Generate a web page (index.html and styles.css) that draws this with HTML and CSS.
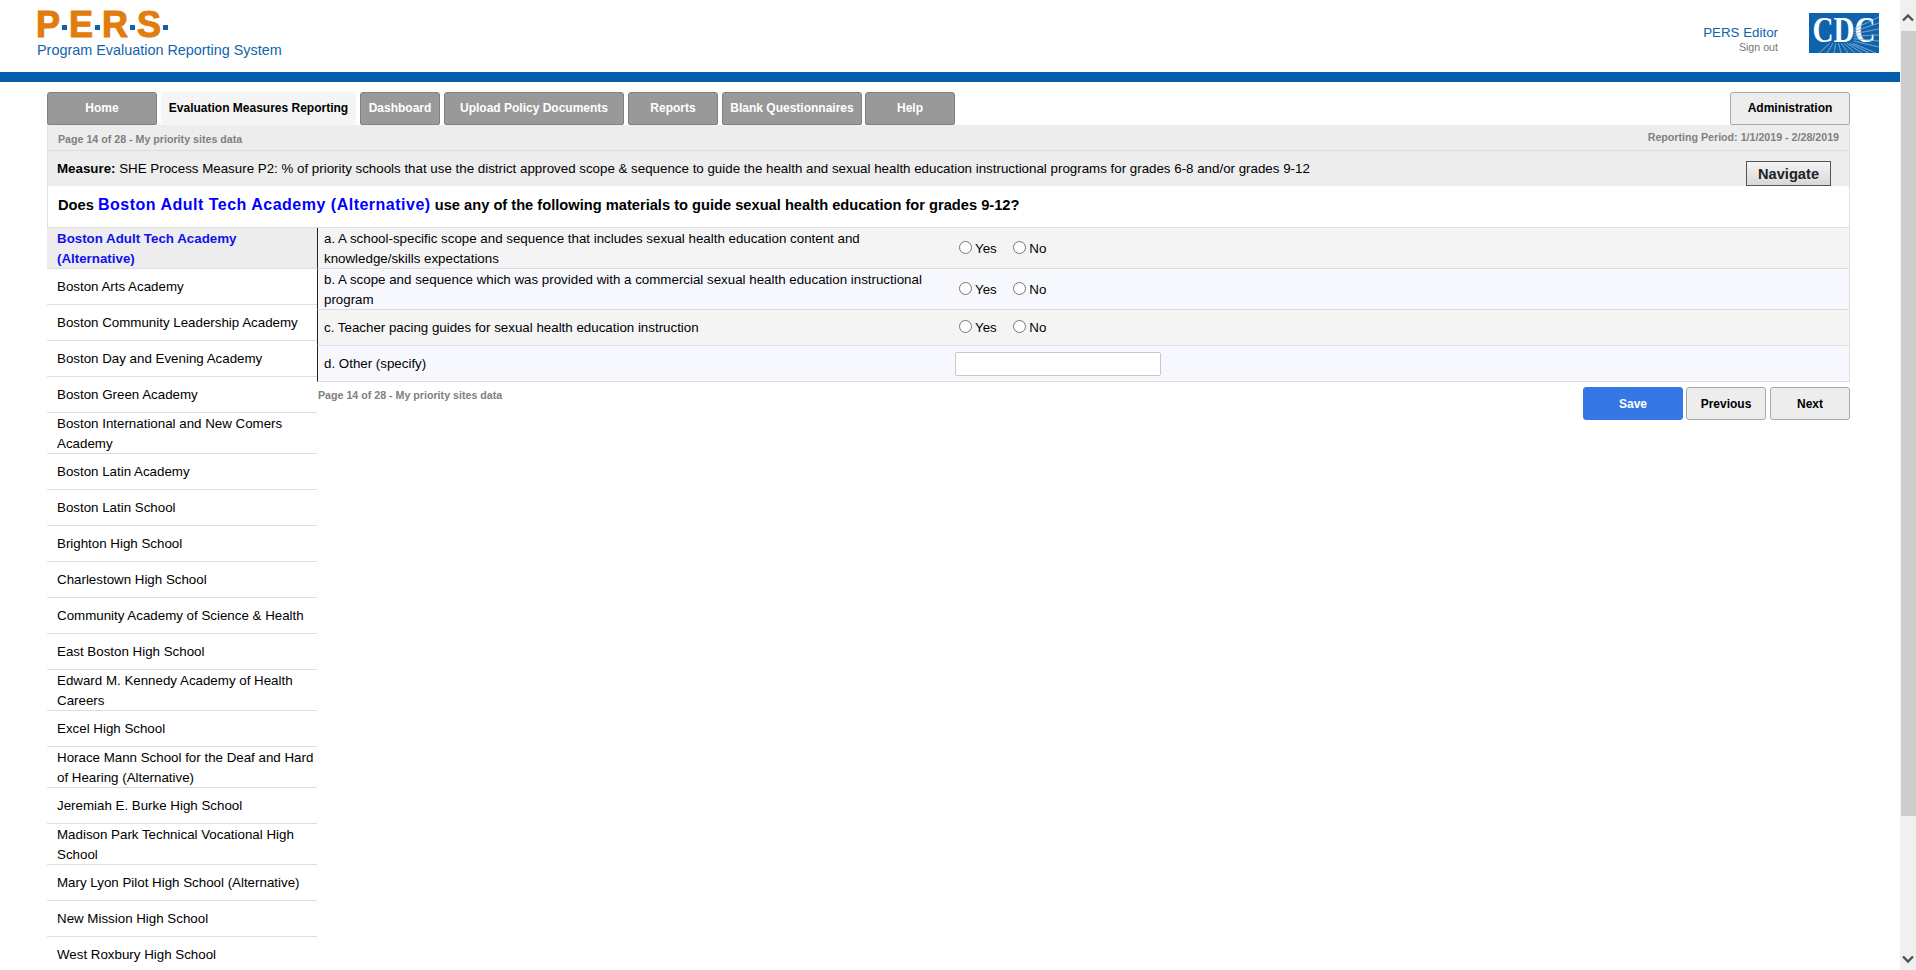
FILE: index.html
```html
<!DOCTYPE html>
<html lang="en">
<head>
<meta charset="utf-8">
<title>PERS</title>
<link rel="stylesheet" href="styles.css">
</head>
<body>
<div class="page">
  <header class="header">
    <div class="brand">
      <div class="logo">P<i></i>E<i></i>R<i></i>S<i></i></div>
      <div class="tagline">Program Evaluation Reporting System</div>
    </div>
    <div class="user">
      <div class="user-name">PERS Editor</div>
      <div class="sign-out">Sign out</div>
    </div>
    <svg class="cdc" viewBox="0 0 70 40" width="70" height="40">
      <defs>
        <path id="rays" d="M20.8 30.4L10 40M24 30.4L18 40M26.8 30.4L25 40M29.6 30.4L32 40M32.4 30.4L39 40M35.2 30.4L46 40M38 30.4L53 40M40.8 30.4L60 40M43.6 30.4L67 40M44.8 28L70 34M44.8 25.6L70 28M44.8 23.2L70 22M44.8 20.8L70 16M44.8 18.4L70 10M44.8 16L70 4"/>
      </defs>
      <rect width="70" height="40" fill="#0f63ad"/>
      <use href="#rays" fill="none" stroke="#fff" stroke-width=".6"/>
      <text class="cdc-text" transform="translate(35 29) scale(.97 1.2)" text-anchor="middle">CDC</text>
      <use href="#rays" fill="none" stroke="#0f63ad" stroke-width=".4"/>
    </svg>
  </header>
  <div class="rule"></div>
  <main class="content">
    <nav class="tabs">
      <a class="tab w-home">Home</a>
      <a class="tab active">Evaluation Measures Reporting</a>
      <a class="tab w-dash">Dashboard</a>
      <a class="tab w-upload">Upload Policy Documents</a>
      <a class="tab w-reports">Reports</a>
      <a class="tab w-blank">Blank Questionnaires</a>
      <a class="tab w-help">Help</a>
      <a class="tab admin">Administration</a>
    </nav>
    <div class="panel">
      <div class="pagebar">
        <span class="muted page-left">Page 14 of 28 - My priority sites data</span>
        <span class="muted page-right">Reporting Period: 1/1/2019 - 2/28/2019</span>
      </div>
      <div class="measure">
        <div><b>Measure:</b> SHE Process Measure P2: % of priority schools that use the district approved scope &amp; sequence to guide the health and sexual health education instructional programs for grades 6-8 and/or grades 9-12</div>
        <button class="navigate">Navigate</button>
      </div>
      <h1 class="question">Does <span class="school">Boston Adult Tech Academy (Alternative)</span> use any of the following materials to guide sexual health education for grades 9-12?</h1>
    </div>
    <div class="columns">
      <ul class="sites">
        <li class="site current">Boston Adult Tech Academy (Alternative)</li>
        <li class="site">Boston Arts Academy</li>
        <li class="site">Boston Community Leadership Academy</li>
        <li class="site">Boston Day and Evening Academy</li>
        <li class="site">Boston Green Academy</li>
        <li class="site">Boston International and New Comers Academy</li>
        <li class="site">Boston Latin Academy</li>
        <li class="site">Boston Latin School</li>
        <li class="site">Brighton High School</li>
        <li class="site">Charlestown High School</li>
        <li class="site">Community Academy of Science &amp; Health</li>
        <li class="site">East Boston High School</li>
        <li class="site">Edward M. Kennedy Academy of Health Careers</li>
        <li class="site">Excel High School</li>
        <li class="site">Horace Mann School for the Deaf and Hard of Hearing (Alternative)</li>
        <li class="site">Jeremiah E. Burke High School</li>
        <li class="site">Madison Park Technical Vocational High School</li>
        <li class="site">Mary Lyon Pilot High School (Alternative)</li>
        <li class="site">New Mission High School</li>
        <li class="site">West Roxbury High School</li>
      </ul>
      <div class="form">
        <div class="table">
          <div class="row odd">
            <div class="label">a. A school-specific scope and sequence that includes sexual health education content and knowledge/skills expectations</div>
            <div class="answer"><label class="radio"><i class="dot"></i>Yes</label><label class="radio"><i class="dot"></i>No</label></div>
          </div>
          <div class="row even">
            <div class="label">b. A scope and sequence which was provided with a commercial sexual health education instructional program</div>
            <div class="answer"><label class="radio"><i class="dot"></i>Yes</label><label class="radio"><i class="dot"></i>No</label></div>
          </div>
          <div class="row odd short">
            <div class="label">c. Teacher pacing guides for sexual health education instruction</div>
            <div class="answer"><label class="radio"><i class="dot"></i>Yes</label><label class="radio"><i class="dot"></i>No</label></div>
          </div>
          <div class="row even short">
            <div class="label">d. Other (specify)</div>
            <div class="answer"><input class="specify" type="text"></div>
          </div>
        </div>
        <div class="footer">
          <span class="muted">Page 14 of 28 - My priority sites data</span>
          <div class="actions">
            <button class="btn save">Save</button>
            <button class="btn prev">Previous</button>
            <button class="btn next">Next</button>
          </div>
        </div>
      </div>
    </div>
  </main>
</div>
<aside class="scrollbar">
  <svg class="arrow" viewBox="0 0 12 8" width="12" height="8"><path d="M1 6.5L6 1.5L11 6.5" fill="none" stroke="#505050" stroke-width="2.4"/></svg>
  <div class="thumb"></div>
  <svg class="arrow" viewBox="0 0 12 8" width="12" height="8"><path d="M1 1.5L6 6.5L11 1.5" fill="none" stroke="#505050" stroke-width="2.4"/></svg>
</aside>
</body>
</html>
```
FILE: styles.css
```css
* { box-sizing: border-box; }
html, body { height: 970px; margin: 0; overflow: hidden; }
body { display: flex; background: #fff; color: #000; font: 13.33px/20px "Liberation Sans", Arial, sans-serif; }
.page { width: 1900px; flex: none; }
.header { height: 72px; display: flex; align-items: flex-start; padding: 13px 21px 0 37px; }
.brand { flex: 1; margin-top: -3px; }
.logo { font-weight: 700; font-size: 36px; line-height: 30px; margin-left: -1px; color: #e17c0d; -webkit-text-stroke: 1.1px #e17c0d; display: flex; align-items: center; }
.logo i { width: 5px; height: 5px; background: #0f63ad; margin: 4px 2px 0 2px; }
.tagline { color: #0f63ad; font-size: 14.4px; line-height: 18px; margin-top: 1px; }
.user { text-align: right; margin-right: 31px; padding-top: 12px; }
.user-name { color: #0f63ad; line-height: 16px; }
.sign-out { color: #777; font-size: 10.67px; line-height: 12px; }
.cdc { display: block; flex: none; overflow: visible; }
.cdc-text { font-family: "Liberation Serif", serif; font-size: 30px; font-weight: 700; fill: #fff; }
.rule { height: 10px; background: #005eaa; }
.content { padding: 10px 50px 0 47px; }
.tabs { display: flex; gap: 4px; height: 33px; }
.tab { display: flex; align-items: center; justify-content: center; padding-bottom: 2px; background: #999; border: 1px solid #808080; border-radius: 3px 3px 2px 2px; color: #fff; font-weight: 700; font-size: 12px; }
.w-home { width: 110px; }
.active { width: 195px; background: #f5f5f5; border: 0; color: #000; }
.w-dash { width: 80px; }
.w-upload { width: 180px; }
.w-reports { width: 90px; }
.w-blank { width: 140px; }
.w-help { width: 90px; margin-left: -1px; }
.admin { width: 120px; margin-left: auto; background: #ededed; color: #000; border-color: #a9a9a9; }
.panel { border: solid #e0e0e0; border-width: 0 1px; }
.pagebar { height: 26px; display: flex; justify-content: space-between; align-items: center; background: #ededed; border-bottom: 1px solid #dedede; padding: 0 10px; }
.page-left { margin-top: 2px; }
.page-right { margin-top: -2px; }
.muted { color: #808080; font-weight: 700; font-size: 10.67px; }
.measure { height: 35px; display: flex; justify-content: space-between; background: #ededed; padding: 0 18px 0 9px; line-height: 36px; }
.navigate { width: 85px; height: 25px; margin-top: 10px; border: 1px solid #555; background: linear-gradient(#f4f4f4, #d8d8d8); font: 700 14.67px "Liberation Sans", Arial, sans-serif; color: #222; padding: 0; }
.question { height: 42px; margin: 0; padding: 0 10px; font-size: 14.67px; line-height: 38px; font-weight: 700; border-bottom: 1px solid #dedede; }
.school { color: #00f; font-size: 16px; letter-spacing: .5px; }
.columns { display: flex; align-items: flex-start; }
.sites { list-style: none; margin: 0; padding: 0; width: 270px; flex: none; }
.site { min-height: 36px; display: flex; align-items: center; padding: 1px 3px 0 10px; line-height: 19.5px; border-bottom: 1px solid #dedede; }
.current { color: #11e; font-weight: 700; background: #ededed; min-height: 41px; }
.form { flex: 1; min-width: 0; }
.table { border-right: 1px solid #e0e0e0; }
.row { display: flex; align-items: center; min-height: 41px; border-left: 1px solid #222; border-bottom: 1px solid #dedede; }
.short { min-height: 36px; }
.odd { background: #f4f4f4; }
.even { background: #f7f8fe; }
.label { width: 634px; flex: none; padding: 1px 5px 0 6px; line-height: 19.5px; }
.answer { display: flex; padding-left: 3px; }
.radio { display: flex; align-items: center; margin-left: 4px; margin-right: 12.5px; padding-top: 1px; }
.dot { width: 13px; height: 13px; border: 1px solid #767676; border-radius: 50%; background: #fff; margin: -3px 3px 0 0; }
.specify { width: 206px; height: 24px; margin: 0; border: 1px solid #c8c8c8; border-radius: 2px; background: #fff; }
.footer { display: flex; justify-content: space-between; align-items: flex-start; padding: 3px 0 0 1px; }
.actions { display: flex; gap: 3px; margin-top: 2px; }
.btn { height: 33px; border: 1px solid #aaa; border-radius: 3px; background: #ededed; font: 700 12px "Liberation Sans", Arial, sans-serif; color: #000; padding: 0; }
.save { width: 100px; background: #3578e5; border-color: #3578e5; color: #fff; }
.prev { width: 80px; }
.next { width: 80px; margin-left: 1px; }
.scrollbar { width: 16px; flex: none; height: 970px; background: #f0f0f0; display: flex; flex-direction: column; align-items: center; justify-content: space-between; padding: 14px 0 7px; position: relative; }
.arrow { display: block; }
.thumb { position: absolute; left: 1px; top: 31px; width: 15px; height: 785px; background: #cdcdcd; }
```
